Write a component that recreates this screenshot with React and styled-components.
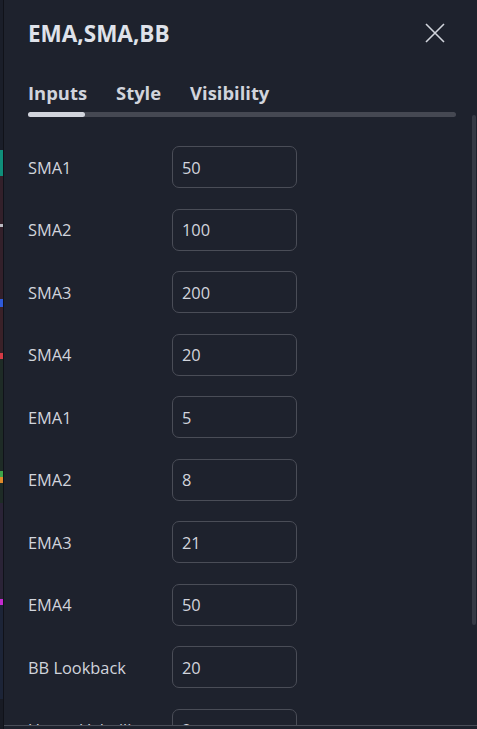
import React from "react";
import styled, { createGlobalStyle } from "styled-components";

const GlobalStyle = createGlobalStyle`
  html, body {
    margin: 0;
    padding: 0;
    height: 100%;
    background: #131722;
    overflow: hidden;
  }
  #root {
    height: 100%;
  }
`;

const Page = styled.div`
  display: flex;
  height: 100vh;
  font-family: "Open Sans", "Liberation Sans", sans-serif;
`;

const ChartStrip = styled.div`
  width: 3px;
  display: flex;
  flex-direction: column;
`;

const Segment = styled.div`
  height: ${(p) => p.h}px;
  background: ${(p) => p.color};
  flex-shrink: 0;
`;

const Divider = styled.div`
  width: 1px;
  background: #101219;
`;

const Dialog = styled.div`
  flex: 1;
  position: relative;
  display: flex;
  flex-direction: column;
  background: #1e222d;
  color: #d1d4dc;
  overflow: hidden;
`;

const Header = styled.div`
  display: flex;
  align-items: center;
  justify-content: space-between;
  padding: 16px 31px 0 24px;
  height: 34px;
`;

const Title = styled.h1`
  margin: 0;
  font-size: 22.5px;
  font-weight: 700;
  color: #dfe2ea;
`;

const CloseButton = styled.button`
  background: none;
  border: none;
  padding: 0;
  width: 22px;
  height: 22px;
  color: #d1d4dc;
  display: flex;
  align-items: center;
  justify-content: center;
`;

const TabBar = styled.div`
  padding: 26px 21px 0 24px;
`;

const TabRow = styled.div`
  display: flex;
  gap: 29px;
  height: 29px;
  align-items: flex-end;
`;

const Tab = styled.div`
  font-size: 18.4px;
  font-weight: 700;
  color: #d1d4dc;
  line-height: 24px;
`;

const Track = styled.div`
  height: 5px;
  margin-top: 7px;
  border-radius: 3px;
  background: #454852;
  display: flex;
`;

const ActiveBar = styled.div`
  width: 57px;
  border-radius: 3px;
  background: #d1d4dc;
`;

const Body = styled.div`
  flex: 1;
  overflow: hidden;
  padding: 29px 24px 0 24px;
  display: flex;
  flex-direction: column;
  gap: 20.5px;
`;

const Row = styled.div`
  display: grid;
  grid-template-columns: 144px 125px;
  align-items: center;
  flex-shrink: 0;
`;

const Label = styled.div`
  font-size: 16.4px;
  color: #d1d4dc;
  white-space: nowrap;
`;

const Input = styled.div`
  height: 40px;
  border: 1px solid #4a4d57;
  border-radius: 7px;
  display: flex;
  align-items: center;
  padding-left: 9px;
  font-size: 16.4px;
  color: #d1d4dc;
`;

const Footer = styled.div`
  height: 3px;
  border-top: 1px solid #4a4e58;
  background: #1e222d;
  flex-shrink: 0;
`;

const ScrollThumb = styled.div`
  position: absolute;
  right: 1px;
  top: 115px;
  width: 4px;
  height: 510px;
  border-radius: 2px;
  background: #363a45;
`;

const strip = [
  { h: 150, color: "#1a1e29" },
  { h: 26, color: "#0f8f7a" },
  { h: 48, color: "#33202a" },
  { h: 3, color: "#b9b9c0" },
  { h: 72, color: "#33202a" },
  { h: 8, color: "#2f5ad8" },
  { h: 46, color: "#3a2128" },
  { h: 6, color: "#d43a45" },
  { h: 112, color: "#1e2b26" },
  { h: 6, color: "#3fa44a" },
  { h: 6, color: "#e08a2a" },
  { h: 20, color: "#1e2b26" },
  { h: 96, color: "#2a2336" },
  { h: 6, color: "#c42ad0" },
  { h: 94, color: "#1c2437" },
  { h: 30, color: "#181b24" },
];

const inputs = [
  ["SMA1", "50"],
  ["SMA2", "100"],
  ["SMA3", "200"],
  ["SMA4", "20"],
  ["EMA1", "5"],
  ["EMA2", "8"],
  ["EMA3", "21"],
  ["EMA4", "50"],
  ["BB Lookback", "20"],
  ["Upper Volatility", "2"],
];

const App = () => {
  return (
    <Page>
      <GlobalStyle />
      <ChartStrip>
        {strip.map((s, i) => (
          <Segment key={i} h={s.h} color={s.color} />
        ))}
      </ChartStrip>
      <Divider />
      <Dialog>
        <Header>
          <Title>EMA,SMA,BB</Title>
          <CloseButton>
            <svg width="20" height="20" viewBox="0 0 20 20">
              <path
                d="M1 1 L19 19 M19 1 L1 19"
                stroke="currentColor"
                strokeWidth="1.6"
                fill="none"
              />
            </svg>
          </CloseButton>
        </Header>
        <TabBar>
          <TabRow>
            <Tab>Inputs</Tab>
            <Tab>Style</Tab>
            <Tab>Visibility</Tab>
          </TabRow>
          <Track>
            <ActiveBar />
          </Track>
        </TabBar>
        <Body>
          {inputs.map(([label, value]) => (
            <Row key={label}>
              <Label>{label}</Label>
              <Input>{value}</Input>
            </Row>
          ))}
        </Body>
        <Footer />
        <ScrollThumb />
      </Dialog>
    </Page>
  );
};

export default App;
